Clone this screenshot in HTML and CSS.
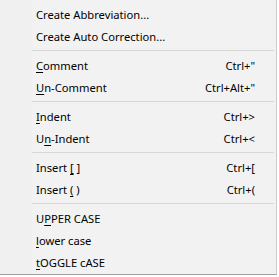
FILE: index.html
```html
<!DOCTYPE html>
<html lang="en">
<head>
  <meta charset="UTF-8" />
  <title>Context Menu</title>
  <link rel="stylesheet" href="styles.css">
</head>
<body>
  <div class="menu">
    <div class="item"><span class="label">Create Abbreviation...</span></div>
    <div class="item"><span class="label">Create Auto Correction...</span></div>
    <div class="sep"></div>
    <div class="item"><span class="label"><u>C</u>omment</span><span class="key">Ctrl+"</span></div>
    <div class="item"><span class="label"><u>U</u>n-Comment</span><span class="key">Ctrl+Alt+"</span></div>
    <div class="sep"></div>
    <div class="item"><span class="label"><u>I</u>ndent</span><span class="key">Ctrl+&gt;</span></div>
    <div class="item"><span class="label">U<u>n</u>-Indent</span><span class="key">Ctrl+&lt;</span></div>
    <div class="sep"></div>
    <div class="item"><span class="label">Insert <u>[</u> ]</span><span class="key">Ctrl+[</span></div>
    <div class="item"><span class="label">Insert <u>(</u> )</span><span class="key">Ctrl+(</span></div>
    <div class="sep"></div>
    <div class="item"><span class="label">U<u>P</u>PER CASE</span></div>
    <div class="item"><span class="label"><u>l</u>ower case</span></div>
    <div class="item"><span class="label"><u>t</u>OGGLE cASE</span></div>
  </div>
</body>
</html>
```
FILE: styles.css
```css
body { margin: 0; background: #ffffff; font-family: "Noto Sans", "Open Sans", sans-serif; font-size: 11.2px; color: #000; }
.menu { width: 276px; height: 271px; padding-top: 3px; background: linear-gradient(to right, #f0f0f0 32px, #f2f2f2 32px); border-right: 1px solid #cccccc; border-bottom: 1px solid #a0a0a0; }
.item { display: flex; justify-content: space-between; align-items: center; height: 22px; padding: 0 21px 0 36px; }
.label u { text-underline-offset: 2px; }
.sep { height: 1px; margin: 3px 2px 3px 32px; background: #d7d7d7; }
```
